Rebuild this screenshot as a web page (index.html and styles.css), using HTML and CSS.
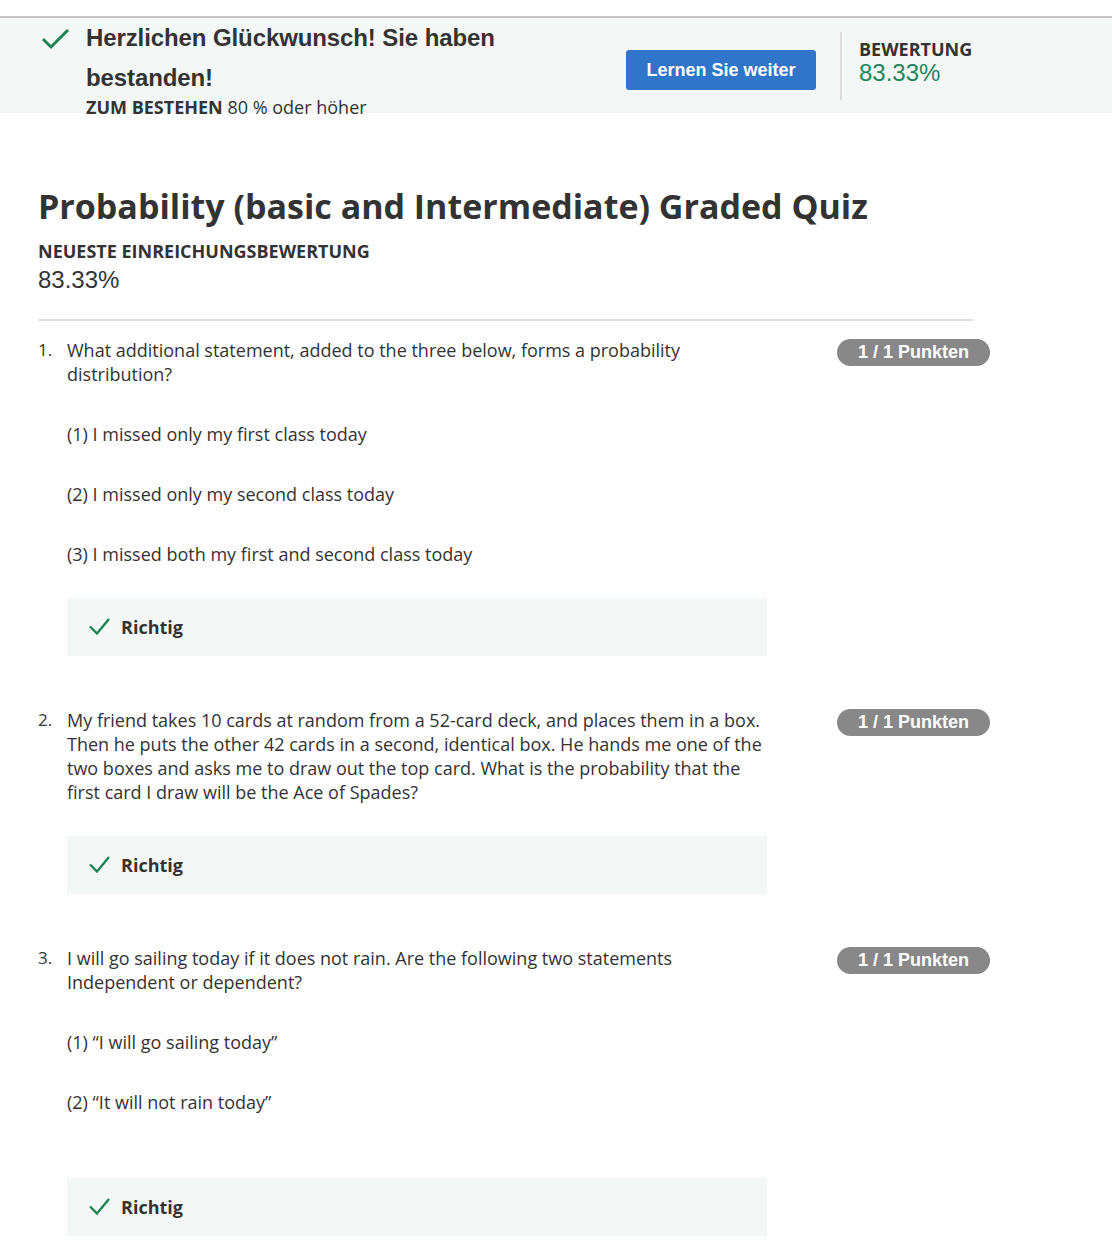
FILE: index.html
```html
<!DOCTYPE html>
<html lang="de">
<head>
<meta charset="utf-8">
<title>Graded Quiz</title>
<link rel="stylesheet" href="styles.css">
</head>
<body>
<div class="topgap"></div>
<header class="banner">
  <div class="banner-msg">
    <svg class="banner-check" width="32" height="24" viewBox="0 0 32 24"><polyline points="3,10 11,18 28,1" fill="none" stroke="#1f8354" stroke-width="3"/></svg>
    <div class="banner-text">
      <h2 class="banner-title">Herzlichen Glückwunsch! Sie haben bestanden!</h2>
      <div class="pass-req"><span class="pass-label">ZUM BESTEHEN</span> 80 % oder höher</div>
    </div>
  </div>
  <div class="banner-action">
    <button class="btn-primary">Lernen Sie weiter</button>
  </div>
  <div class="banner-grade">
    <div class="grade-label">BEWERTUNG</div>
    <div class="grade-value">83.33%</div>
  </div>
</header>

<main class="content">
  <h1 class="quiz-title">Probability (basic and Intermediate) Graded Quiz</h1>
  <div class="latest-label">NEUESTE EINREICHUNGSBEWERTUNG</div>
  <div class="latest-value">83.33%</div>
  <hr class="divider">

  <section class="question">
    <div class="q-num">1.</div>
    <div class="q-body">
      <p class="q-text">What additional statement, added to the three below, forms a probability distribution?</p>
      <p class="q-opt">(1) I missed only my first class today</p>
      <p class="q-opt">(2) I missed only my second class today</p>
      <p class="q-opt">(3) I missed both my first and second class today</p>
      <div class="feedback">
        <svg class="fb-check" width="22" height="18" viewBox="0 0 22 18"><polyline points="1,8.5 8,15.5 20,1" fill="none" stroke="#1f8354" stroke-width="2.4"/></svg>
        <span>Richtig</span>
      </div>
    </div>
    <div class="q-score"><span class="badge">1 / 1 Punkten</span></div>
  </section>

  <section class="question">
    <div class="q-num">2.</div>
    <div class="q-body">
      <p class="q-text">My friend takes 10 cards at random from a 52-card deck, and places them in a box. Then he puts the other 42 cards in a second, identical box. He hands me one of the two boxes and asks me to draw out the top card. What is the probability that the first card I draw will be the Ace of Spades?</p>
      <div class="feedback">
        <svg class="fb-check" width="22" height="18" viewBox="0 0 22 18"><polyline points="1,8.5 8,15.5 20,1" fill="none" stroke="#1f8354" stroke-width="2.4"/></svg>
        <span>Richtig</span>
      </div>
    </div>
    <div class="q-score"><span class="badge">1 / 1 Punkten</span></div>
  </section>

  <section class="question">
    <div class="q-num">3.</div>
    <div class="q-body">
      <p class="q-text">I will go sailing today if it does not rain. Are the following two statements Independent or dependent?</p>
      <p class="q-opt">(1) “I will go sailing today”</p>
      <p class="q-opt">(2) “It will not rain today”</p>
      <div class="feedback fb-loose">
        <svg class="fb-check" width="22" height="18" viewBox="0 0 22 18"><polyline points="1,8.5 8,15.5 20,1" fill="none" stroke="#1f8354" stroke-width="2.4"/></svg>
        <span>Richtig</span>
      </div>
    </div>
    <div class="q-score"><span class="badge">1 / 1 Punkten</span></div>
  </section>
</main>
</body>
</html>
```

FILE: styles.css
```css
* { box-sizing: border-box; }
html, body { margin: 0; padding: 0; background: #fff; }
body {
  font-family: "Open Sans", "Noto Sans", sans-serif;
  color: #333;
  overflow: hidden;
}
.topgap { height: 16px; }

.banner {
  display: flex;
  height: 97px;
  background: #f3f8f6;
  border-top: 2px solid #c4c4c4;
}
.banner-msg {
  display: flex;
  align-items: flex-start;
  padding-left: 40px;
  width: 600px;
}
.banner-check { margin-top: 11px; flex: none; }
.banner-text { margin-left: 14px; }
.banner-title {
  margin: 0;
  font-family: "Liberation Sans", Arial, sans-serif;
  font-weight: 700;
  font-size: 24px;
  line-height: 40px;
  color: #333;
  width: 440px;
  letter-spacing: -0.1px;
}
.pass-req {
  margin-top: -2px;
  font-size: 18px;
  line-height: 22px;
  color: #333;
  white-space: nowrap;
}
.pass-label { font-weight: 700; }

.banner-action {
  width: 240px;
  padding-left: 26px;
  padding-top: 32px;
}
.btn-primary {
  width: 190px;
  height: 40px;
  border: none;
  border-radius: 3px;
  background: #2f75ca;
  color: #fff;
  font-family: "Liberation Sans", Arial, sans-serif;
  font-weight: 700;
  font-size: 18px;
}
.banner-grade {
  margin-top: 14px;
  height: 68px;
  border-left: 2px solid #dcdcdc;
  padding-left: 17px;
  padding-top: 6px;
}
.grade-label {
  font-weight: 700;
  font-size: 18px;
  line-height: 22px;
  color: #333;
}
.grade-value {
  font-family: "Liberation Sans", Arial, sans-serif;
  font-size: 24px;
  line-height: 26px;
  color: #21855a;
}

.content {
  padding: 0 0 0 38px;
}
.quiz-title {
  margin: 70px 0 0;
  font-size: 34px;
  line-height: 46px;
  font-weight: 700;
  color: #333;
}
.latest-label {
  margin-top: 11px;
  font-size: 18px;
  line-height: 22px;
  font-weight: 700;
  color: #333;
}
.latest-value {
  margin-top: 3px;
  font-family: "Liberation Sans", Arial, sans-serif;
  font-size: 24px;
  line-height: 30px;
  color: #333;
}
.divider {
  margin: 24px 0 0;
  width: 935px;
  border: none;
  border-top: 2px solid #e1e1e1;
}

.question {
  display: flex;
  margin-top: 17px;
}
.question + .question { margin-top: 52px; }
.q-num {
  width: 29px;
  flex: none;
  font-size: 17px;
  line-height: 24px;
}
.q-body { width: 700px; flex: none; }
.q-text, .q-opt {
  margin: 0;
  font-size: 18px;
  line-height: 24px;
  color: #333;
}
.q-opt { margin-top: 36px; }
.feedback {
  margin-top: 32px;
  height: 58px;
  background: #f3f8f6;
  display: flex;
  align-items: center;
  padding-left: 22px;
  font-size: 18px;
  font-weight: 700;
  color: #333;
}
.fb-loose { margin-top: 64px; }
.fb-check { margin-right: 10px; }
.q-score { margin-left: 70px; padding-top: 1px; }
.badge {
  display: inline-block;
  width: 153px;
  height: 27px;
  border-radius: 14px;
  background: #888;
  color: #fff;
  font-family: "Liberation Sans", Arial, sans-serif;
  font-weight: 700;
  font-size: 18px;
  line-height: 27px;
  text-align: center;
}
```
